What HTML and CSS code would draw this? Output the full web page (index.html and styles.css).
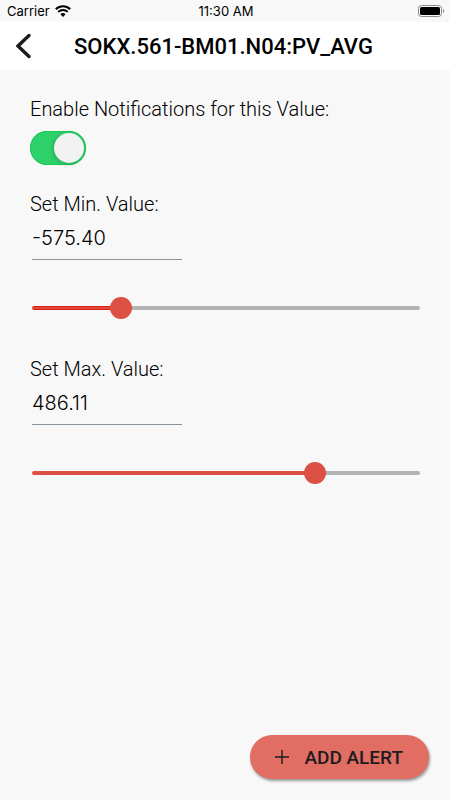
FILE: index.html
```html
<!DOCTYPE html>
<html lang="en">
<head>
    <meta charset="UTF-8">
    <meta name="viewport" content="width=device-width, initial-scale=1.0">
    <title>Value Alerts</title>
    <link rel="stylesheet" href="styles.css">
</head>
<body>

<div class="status-bar">
    <div class="carrier">
        <span>Carrier</span>
        <svg width="16" height="12" viewBox="0 0 16 12" aria-hidden="true">
            <path d="M0.8 4.3a10.2 10.2 0 0 1 14.4 0M3.2 6.9a6.8 6.8 0 0 1 9.6 0" fill="none" stroke="#000" stroke-width="2"/>
            <path d="M8 12 5.4 9.2a3.8 3.8 0 0 1 5.2 0z" fill="#000"/>
        </svg>
    </div>
    <span>11:30 AM</span>
    <svg class="battery" width="27" height="12" viewBox="0 0 27 12" aria-hidden="true">
        <rect x="0.5" y="0.5" width="23" height="11" rx="3" fill="none" stroke="#8a8a8a"/>
        <rect x="2" y="2" width="20" height="8" rx="1.5" fill="#000"/>
        <path d="M25 4v4a2.2 2.2 0 0 0 0-4z" fill="#8a8a8a"/>
    </svg>
</div>

<header class="header">
    <button class="back-btn" type="button" aria-label="Back">
        <svg width="16" height="26" viewBox="0 0 16 26" aria-hidden="true">
            <path d="M13 2.5 2 13l11 10.5" fill="none" stroke="#1c1c1e" stroke-width="3.4" stroke-linecap="round" stroke-linejoin="miter"/>
        </svg>
    </button>
    <h1 class="title">SOKX.561-BM01.N04:PV_AVG</h1>
</header>

<main class="container">
    <label for="notifySwitch" class="label">Enable Notifications for this Value:</label>
    <input id="notifySwitch" class="switch" type="checkbox" role="switch" checked>

    <div class="value-group">
        <label for="minValue" class="label">Set Min. Value:</label>
        <input id="minValue" class="input" type="text" inputmode="decimal" value="-575.40">
        <input id="minSlider" class="slider slider-min" type="range" min="-1000" max="1000" step="0.01" value="-575.40" aria-label="Min. value">
    </div>

    <div class="value-group">
        <label for="maxValue" class="label">Set Max. Value:</label>
        <input id="maxValue" class="input" type="text" inputmode="decimal" value="486.11">
        <input id="maxSlider" class="slider" type="range" min="-1000" max="1000" step="0.01" value="486.11" aria-label="Max. value">
    </div>
</main>

<footer class="footer">
    <button class="add-btn" type="button">
        <svg width="14" height="14" viewBox="0 0 14 14" aria-hidden="true">
            <path d="M7 0v14M0 7h14" stroke="#1c1c1e" stroke-width="1.4"/>
        </svg>
        <span>ADD ALERT</span>
    </button>
</footer>

<script>
    // Colour the part of the track left of the thumb
    function fillTrack(slider) {
        const percent = (slider.value - slider.min) / (slider.max - slider.min) * 100;
        slider.style.setProperty('--fill', `${percent}%`);
    }

    function linkSlider(inputId, sliderId) {
        const input = document.getElementById(inputId);
        const slider = document.getElementById(sliderId);

        slider.addEventListener('input', () => {
            input.value = Number(slider.value).toFixed(2);
            fillTrack(slider);
        });

        input.addEventListener('change', () => {
            if (!isNaN(Number(input.value)) && input.value.trim() !== '') {
                slider.value = input.value;
            }
            input.value = Number(slider.value).toFixed(2);
            fillTrack(slider);
        });

        fillTrack(slider);
    }

    linkSlider('minValue', 'minSlider');
    linkSlider('maxValue', 'maxSlider');
</script>

</body>
</html>
```

FILE: styles.css
```css
* {
    box-sizing: border-box;
}
body {
    font-family: Roboto, Arial, sans-serif;
    margin: 0;
    min-height: 100vh;
    display: flex;
    flex-direction: column;
    background-color: #f8f8f8;
    color: #000;
}
.status-bar {
    display: grid;
    grid-template-columns: 1fr auto 1fr;
    align-items: center;
    height: 22px;
    padding: 0 5px 0 7px;
    font-family: Inter, Roboto, sans-serif;
    font-size: 13px;
}
.carrier {
    display: flex;
    align-items: center;
    gap: 5px;
}
.battery {
    justify-self: end;
}
.header {
    display: flex;
    align-items: center;
    gap: 42px;
    height: 48px;
    padding: 0 16px;
    background-color: #fff;
}
.back-btn {
    display: flex;
    padding: 0;
    border: none;
    background: none;
    cursor: pointer;
}
.title {
    margin: 0;
    font-size: 22px;
    font-weight: 500;
}
.container {
    flex: 1;
    padding: 27px 30px;
}
.label {
    display: block;
    font-size: 20px;
    font-weight: 300;
    line-height: 24px;
}
.switch {
    appearance: none;
    display: block;
    width: 56px;
    height: 34px;
    margin: 10px 0 27px;
    padding: 2px;
    border-radius: 17px;
    background-color: #ccc;
    cursor: pointer;
}
.switch::before {
    content: "";
    display: block;
    width: 30px;
    height: 30px;
    border-radius: 50%;
    background-color: #f2f2f2;
    box-shadow: -1px 1px 4px rgba(0, 0, 0, 0.2);
}
.switch:checked {
    background-color: #2fd16a;
    box-shadow: inset 0 0 0 1px #16c957;
}
.switch:checked::before {
    margin-left: auto;
}
.value-group {
    margin-bottom: 38px;
}
.input {
    display: block;
    width: 150px;
    height: 44px;
    margin-left: 2px;
    padding: 0;
    border: none;
    border-bottom: 1px solid #8a949c;
    border-radius: 0;
    background: none;
    font-family: Inter, Roboto, sans-serif;
    font-size: 20px;
    font-weight: 300;
    color: #000;
}
.slider {
    appearance: none;
    display: block;
    width: calc(100% - 2px);
    height: 22px;
    margin: 37px 0 0 2px;
    background: none;
    cursor: pointer;
}
.slider::-webkit-slider-runnable-track {
    height: 4px;
    border-radius: 2px;
    background: linear-gradient(to right, #dd5144 var(--fill), #b2b2b2 var(--fill));
}
.slider::-webkit-slider-thumb {
    appearance: none;
    width: 22px;
    height: 22px;
    margin-top: -9px;
    border-radius: 50%;
    background-color: #dd5144;
}
.slider-min::-webkit-slider-runnable-track {
    background:
        linear-gradient(#dc1e10 1px, #e04a3c 1px, #e04a3c 3px, #dc1e10 3px) 0 0 / var(--fill) 100% no-repeat,
        #b2b2b2;
}
.footer {
    display: flex;
    justify-content: flex-end;
    padding: 0 21px 21px;
}
.add-btn {
    display: flex;
    align-items: center;
    gap: 15px;
    height: 44px;
    padding: 0 26px 0 25px;
    border: none;
    border-radius: 22px;
    background-color: #e26e63;
    box-shadow: 1px 2px 3px rgba(0, 0, 0, 0.4);
    font-family: inherit;
    font-size: 19px;
    font-weight: 500;
    color: #1c1c1e;
    cursor: pointer;
}
```
